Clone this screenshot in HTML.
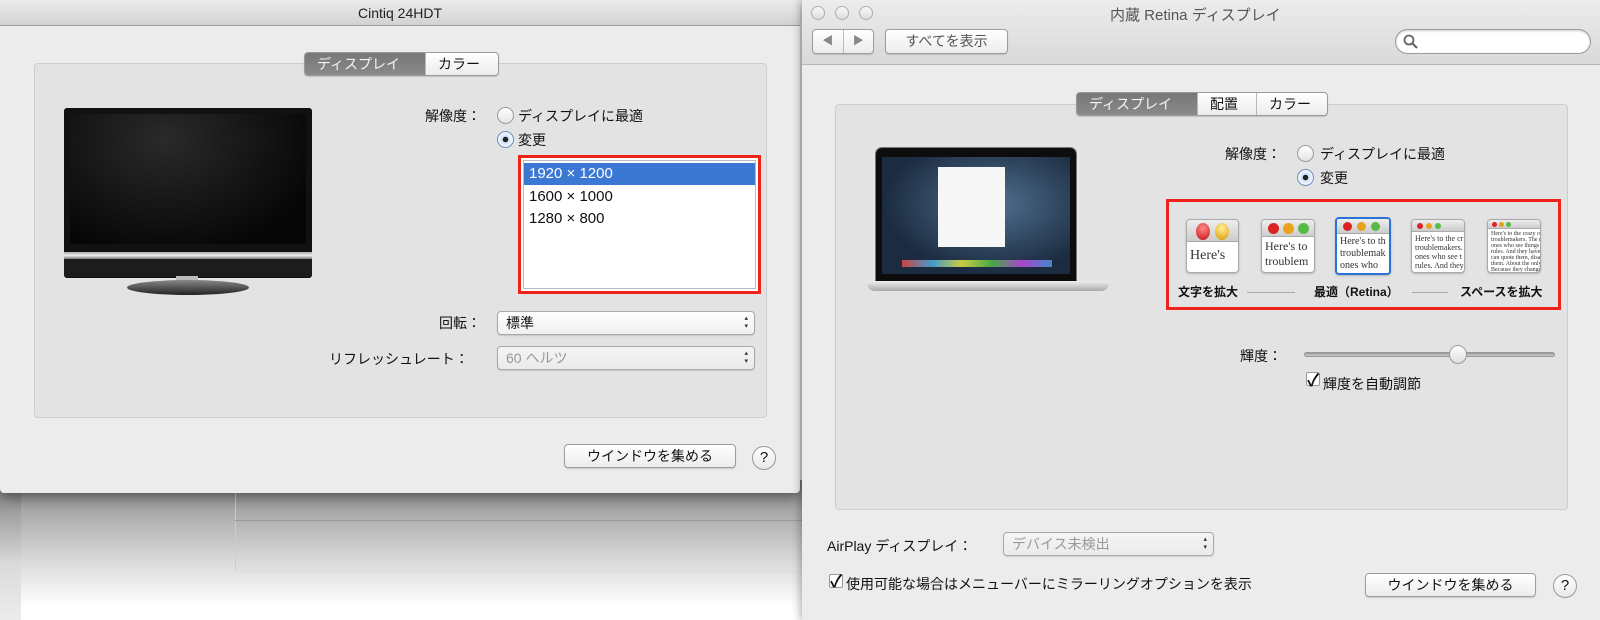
<!DOCTYPE html>
<html><head><meta charset="utf-8"><style>
*{box-sizing:border-box;margin:0;padding:0}
body{width:1600px;height:620px;overflow:hidden;position:relative;background:#fff;font-family:"Liberation Sans","Noto Sans CJK JP",sans-serif;font-size:13px;color:#111}
.a{position:absolute}
.win{background:#ececec}
.tabs{display:flex;border:1px solid #9a9a9a;border-radius:4px;overflow:hidden;height:24px;background:linear-gradient(#fff,#ececec);box-shadow:0 1px 1px rgba(0,0,0,.15)}
.tabs div{padding:0 12px;line-height:22px;font-size:14px;border-left:1px solid #b8b8b8}
.tabs .sel{background:linear-gradient(#777,#8a8a8a);color:#f4f4f4;border-left:none}
.grp{background:#e3e3e3;border:1px solid #cdcdcd;border-radius:4px}
.radio{width:17px;height:17px;border-radius:50%;border:1px solid #9a9a9a;background:linear-gradient(#fff,#e4e4e4)}
.radio.on{background:radial-gradient(circle,#222 0 2.5px,#cfe2f7 3px,#fff 9px);border-color:#6f8fb8}
.pop{border:1px solid #a8a8a8;border-radius:4px;background:linear-gradient(#fff,#f0f0f0);box-shadow:0 1px 1px rgba(0,0,0,.12);padding-left:8px;line-height:22px;font-size:14px}
.pop:after{content:"▴\A▾";white-space:pre;position:absolute;right:6px;top:3px;font-size:7px;line-height:8px;color:#333}
.pop.dis{color:#999;background:linear-gradient(#f4f4f4,#ebebeb)}
.btn{border:1px solid #9d9d9d;border-radius:4px;background:linear-gradient(#fff,#ececec);box-shadow:0 1px 1px rgba(0,0,0,.15);text-align:center;line-height:22px;font-size:14px}
.help{border:1px solid #999;border-radius:50%;background:linear-gradient(#fff,#e8e8e8);text-align:center;line-height:22px;font-size:15px}
.lbl{font-size:14px;white-space:nowrap}
.thumb{border:1px solid #aaa;border-radius:4px;background:#fff;overflow:hidden;box-shadow:0 1px 2px rgba(0,0,0,.2)}
.tb{background:linear-gradient(#eee,#ccc);border-bottom:1px solid #aaa;position:relative}
.d{position:absolute;border-radius:50%}
.tt{font-family:"Liberation Serif",serif;color:#333;padding:2px 3px;white-space:nowrap;overflow:hidden}
</style></head><body>

<!-- background shadowed window -->
<div class="a" style="left:0;top:480px;width:810px;height:140px;background:linear-gradient(#8a8a8a,#d6d6d6 55%,#fff 90%)"></div>
<div class="a" style="left:0;top:480px;width:21px;height:140px;background:linear-gradient(#7a7a7a,#dadada 60%,#ececec)"></div>
<div class="a" style="left:235px;top:480px;width:570px;height:92px;border-left:1px solid #ccc;border-bottom:1px solid #ddd"></div>
<div class="a" style="left:235px;top:520px;width:570px;height:1px;background:#999"></div>

<!-- left window -->
<div class="a win" style="left:0;top:0;width:800px;height:493px;border-radius:0 0 4px 4px;box-shadow:0 4px 14px rgba(0,0,0,.45)">
 <div class="a" style="left:0;top:0;width:800px;height:26px;background:linear-gradient(#ececec,#d2d2d2);border-bottom:1px solid #9c9c9c;text-align:center;line-height:26px;font-size:14px;color:#222">Cintiq 24HDT</div>
 <div class="a grp" style="left:34px;top:63px;width:733px;height:355px"></div>
 <div class="a tabs" style="left:304px;top:52px;width:195px"><div class="sel" style="width:120px">ディスプレイ</div><div>カラー</div></div>
 <!-- monitor -->
 <div class="a" style="left:64px;top:108px;width:248px;height:170px;background:#111;border-radius:3px"></div>
 <div class="a" style="left:70px;top:114px;width:236px;height:130px;background:radial-gradient(ellipse at 40% 20%,#2a2a2a,#060606 80%)"></div>
 <div class="a" style="left:64px;top:252px;width:248px;height:7px;background:linear-gradient(#aaa,#eee,#777)"></div>
 <div class="a" style="left:64px;top:259px;width:248px;height:18px;background:#1c1c1c;border-radius:0 0 3px 3px"></div>
 <div class="a" style="left:176px;top:276px;width:22px;height:6px;background:#bbb"></div>
 <div class="a" style="left:127px;top:280px;width:122px;height:15px;border-radius:50%;background:linear-gradient(#888,#222)"></div>
 <div class="a lbl" style="left:425px;top:106px">解像度：</div>
 <div class="a radio" style="left:497px;top:107px"></div>
 <div class="a lbl" style="left:518px;top:106px">ディスプレイに最適</div>
 <div class="a radio on" style="left:497px;top:131px"></div>
 <div class="a lbl" style="left:518px;top:130px">変更</div>
 <div class="a" style="left:518px;top:155px;width:243px;height:139px;border:3px solid #f0231a;background:#fff">
  <div style="position:absolute;left:2px;top:2px;right:2px;bottom:2px;border:1px solid #bbb"></div>
  <div style="position:absolute;left:3px;top:5px;right:3px;height:22px;background:#3a78d4;color:#fff;font-size:15px;line-height:22px;padding-left:5px">1920 × 1200</div>
  <div style="position:absolute;left:8px;top:28px;font-size:15px;line-height:22px">1600 × 1000</div>
  <div style="position:absolute;left:8px;top:50px;font-size:15px;line-height:22px">1280 × 800</div>
 </div>
 <div class="a lbl" style="left:439px;top:313px">回転：</div>
 <div class="a pop" style="left:497px;top:311px;width:258px;height:24px">標準</div>
 <div class="a lbl" style="left:329px;top:349px">リフレッシュレート：</div>
 <div class="a pop dis" style="left:497px;top:346px;width:258px;height:24px">60 ヘルツ</div>
 <div class="a btn" style="left:564px;top:444px;width:172px;height:24px">ウインドウを集める</div>
 <div class="a help" style="left:752px;top:446px;width:24px;height:24px">?</div>
</div>

<!-- right window -->
<div class="a win" style="left:802px;top:0;width:798px;height:620px;box-shadow:-2px 0 8px rgba(0,0,0,.3)">
 <div class="a" style="left:0;top:0;width:798px;height:65px;background:linear-gradient(#ececec,#d9d9d9);border-bottom:1px solid #b5b5b5"></div>
 <div class="a" style="left:9px;top:6px;width:14px;height:14px;border-radius:50%;border:1px solid #b0b0b0;background:linear-gradient(#f8f8f8,#ddd)"></div>
 <div class="a" style="left:33px;top:6px;width:14px;height:14px;border-radius:50%;border:1px solid #b0b0b0;background:linear-gradient(#f8f8f8,#ddd)"></div>
 <div class="a" style="left:57px;top:6px;width:14px;height:14px;border-radius:50%;border:1px solid #b0b0b0;background:linear-gradient(#f8f8f8,#ddd)"></div>
 <div class="a" style="left:308px;top:4px;font-size:15px;color:#555;white-space:nowrap">内蔵 Retina ディスプレイ</div>
 <div class="a btn" style="left:10px;top:29px;width:62px;height:25px;color:#888;font-size:11px;display:flex"><span style="flex:1;border-right:1px solid #bbb">◀</span><span style="flex:1">▶</span></div>
 <div class="a btn" style="left:83px;top:29px;width:123px;height:25px;color:#555">すべてを表示</div>
 <div class="a" style="left:593px;top:29px;width:196px;height:25px;border:1px solid #9a9a9a;border-radius:13px;background:#fff;box-shadow:inset 0 1px 2px rgba(0,0,0,.2)">
  <svg width="18" height="18" style="position:absolute;left:6px;top:3px"><circle cx="7" cy="7" r="4.5" fill="none" stroke="#666" stroke-width="1.8"/><path d="M10 10l5 5" stroke="#666" stroke-width="2.2"/></svg>
 </div>
 <div class="a grp" style="left:33px;top:104px;width:733px;height:406px"></div>
 <div class="a tabs" style="left:274px;top:92px;width:252px"><div class="sel" style="width:120px">ディスプレイ</div><div style="width:59px">配置</div><div>カラー</div></div>
 <!-- laptop -->
 <div class="a" style="left:73px;top:147px;width:202px;height:135px;background:#0d0d0d;border-radius:7px 7px 0 0;border:1px solid #777"></div>
 <div class="a" style="left:80px;top:157px;width:188px;height:117px;background:radial-gradient(ellipse at 60% 40%,#4f6f8f,#1b2b40 70%)"></div>
 <div class="a" style="left:136px;top:167px;width:67px;height:80px;background:#f6f6f6"></div>
 <div class="a" style="left:100px;top:260px;width:150px;height:7px;background:linear-gradient(90deg,#c44,#49c,#cc4,#4a4,#a4c,#48c)"></div>
 <div class="a" style="left:65px;top:281px;width:242px;height:10px;border-radius:2px 2px 8px 8px;background:linear-gradient(#eee,#aaa)"></div>
 <div class="a lbl" style="left:423px;top:144px">解像度：</div>
 <div class="a radio" style="left:495px;top:145px"></div>
 <div class="a lbl" style="left:518px;top:144px">ディスプレイに最適</div>
 <div class="a radio on" style="left:495px;top:169px"></div>
 <div class="a lbl" style="left:518px;top:168px">変更</div>
 <div class="a" style="left:364px;top:199px;width:395px;height:111px;border:3px solid #f0231a"></div>
 <!-- thumbs -->
 <div class="a thumb" style="left:384px;top:219px;width:53px;height:54px"><div class="tb" style="height:22px"><div class="d" style="left:9px;top:3px;width:14px;height:17px;background:radial-gradient(circle at 50% 30%,#f88,#c11)"></div><div class="d" style="left:28px;top:3px;width:14px;height:17px;background:radial-gradient(circle at 50% 30%,#fe9,#d90)"></div></div><div class="tt" style="font-size:14px;padding-top:6px">Here's</div></div>
 <div class="a thumb" style="left:459px;top:219px;width:54px;height:54px"><div class="tb" style="height:17px"><div class="d" style="left:6px;top:3px;width:11px;height:11px;background:#d22"></div><div class="d" style="left:21px;top:3px;width:11px;height:11px;background:#e9a21b"></div><div class="d" style="left:36px;top:3px;width:11px;height:11px;background:#5b4"></div></div><div class="tt" style="font-size:12px;line-height:15px">Here's to<br>troublem</div></div>
 <div class="a thumb" style="left:533px;top:217px;width:56px;height:58px;border:2px solid #2a74d8"><div class="tb" style="height:15px"><div class="d" style="left:6px;top:3px;width:9px;height:9px;background:#d22"></div><div class="d" style="left:20px;top:3px;width:9px;height:9px;background:#e9a21b"></div><div class="d" style="left:34px;top:3px;width:9px;height:9px;background:#5b4"></div></div><div class="tt" style="font-size:10px;line-height:12px">Here's to th<br>troublemak<br>ones who</div></div>
 <div class="a thumb" style="left:609px;top:219px;width:54px;height:54px"><div class="tb" style="height:12px"><div class="d" style="left:5px;top:3px;width:6px;height:6px;background:#d22"></div><div class="d" style="left:14px;top:3px;width:6px;height:6px;background:#e9a21b"></div><div class="d" style="left:23px;top:3px;width:6px;height:6px;background:#5b4"></div></div><div class="tt" style="font-size:8px;line-height:9px">Here's to the cr<br>troublemakers.<br>ones who see t<br>rules. And they</div></div>
 <div class="a thumb" style="left:685px;top:219px;width:54px;height:54px"><div class="tb" style="height:9px"><div class="d" style="left:4px;top:2px;width:5px;height:5px;background:#d22"></div><div class="d" style="left:11px;top:2px;width:5px;height:5px;background:#e9a21b"></div><div class="d" style="left:18px;top:2px;width:5px;height:5px;background:#5b4"></div></div><div class="tt" style="font-size:6px;line-height:6px">Here's to the crazy one<br>troublemakers. The rou<br>ones who see things di<br>rules. And they have no<br>can quote them, disagr<br>them. About the only th<br>Because they change th</div></div>
 <div class="a" style="left:376px;top:283px;font-size:12px;font-weight:bold;white-space:nowrap">文字を拡大</div>
 <div class="a" style="left:445px;top:292px;width:48px;height:1px;background:#aaa"></div>
 <div class="a" style="left:512px;top:283px;font-size:12px;font-weight:bold;white-space:nowrap">最適（Retina）</div>
 <div class="a" style="left:610px;top:292px;width:36px;height:1px;background:#aaa"></div>
 <div class="a" style="left:658px;top:283px;font-size:12px;font-weight:bold;white-space:nowrap">スペースを拡大</div>
 <div class="a lbl" style="left:438px;top:346px">輝度：</div>
 <div class="a" style="left:502px;top:352px;width:251px;height:5px;border-radius:3px;background:linear-gradient(#999,#ccc);border:1px solid #999"></div>
 <div class="a" style="left:647px;top:345px;width:18px;height:19px;border-radius:50%;border:1px solid #999;background:linear-gradient(#fff,#ddd)"></div>
 <div class="a" style="left:504px;top:372px;width:14px;height:14px;border:1px solid #999;border-radius:2px;background:#fff"></div>
 <div class="a" style="left:505px;top:366px;font-size:17px;font-weight:bold">✓</div>
 <div class="a lbl" style="left:521px;top:374px">輝度を自動調節</div>
 <div class="a lbl" style="left:25px;top:536px">AirPlay ディスプレイ：</div>
 <div class="a pop dis" style="left:201px;top:532px;width:211px;height:24px">デバイス未検出</div>
 <div class="a" style="left:27px;top:574px;width:14px;height:14px;border:1px solid #999;border-radius:2px;background:#fff"></div>
 <div class="a" style="left:28px;top:567px;font-size:17px;font-weight:bold">✓</div>
 <div class="a lbl" style="left:44px;top:574px">使用可能な場合はメニューバーにミラーリングオプションを表示</div>
 <div class="a btn" style="left:563px;top:573px;width:171px;height:24px">ウインドウを集める</div>
 <div class="a help" style="left:751px;top:574px;width:24px;height:24px">?</div>
</div>
</body></html>
